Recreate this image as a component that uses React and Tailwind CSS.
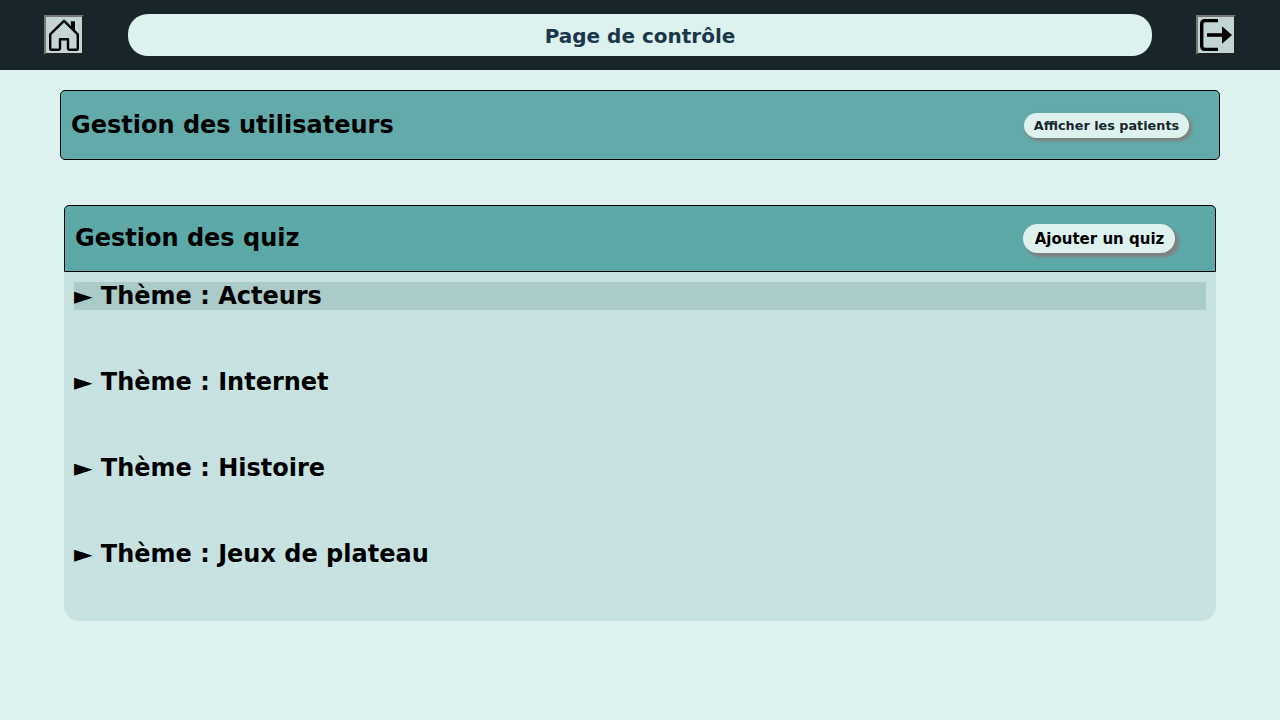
const THEMES = ["Acteurs", "Internet", "Histoire", "Jeux de plateau"];

function IconButton({ label, children }) {
  return (
    <button
      aria-label={label}
      className="flex size-10 items-center justify-center border-2 border-t-[#767676] border-l-[#767676] border-r-[#212121] border-b-[#212121] bg-[#c3d5d2]"
    >
      {children}
    </button>
  );
}

function HomeIcon() {
  return (
    <svg viewBox="0 0 36 36" className="size-9" fill="none" stroke="#000">
      <path d="M24.8 4.2H29V15L24.8 11Z" fill="#000" stroke="none" />
      <path
        d="M18 3.8 4.2 17.4V31.8q0 1 1 1h7.6q1.2 0 1.2-1.2V22.3h8v9.3q0 1.2 1.2 1.2h7.6q1 0 1-1V17.4Z"
        strokeWidth="2.4"
        strokeLinejoin="round"
      />
    </svg>
  );
}

function LogoutIcon() {
  return (
    <svg viewBox="0 0 36 36" className="size-9" fill="none" stroke="#000">
      <path d="M20 3.6H7Q3.7 3.6 3.7 6.9v22.2Q3.7 32.4 7 32.4h13" strokeWidth="3.4" />
      <path d="M9 18h16" strokeWidth="3.6" />
      <path d="M24 9.3 34 18 24 26.7Z" fill="#000" stroke="none" />
    </svg>
  );
}

export default function App() {
  return (
    <div className="min-h-screen bg-[#ddf1ef] font-['DejaVu_Sans',sans-serif] font-bold text-black">
      <header className="flex h-[70px] items-center justify-between bg-[#18252a] px-11">
        <IconButton label="Accueil">
          <HomeIcon />
        </IconButton>
        <h1 className="flex h-[42px] w-[1024px] items-center justify-center rounded-[20px] bg-[#ddf1ef] pt-0.5 text-xl text-[#1a374a]">
          Page de contrôle
        </h1>
        <IconButton label="Déconnexion">
          <LogoutIcon />
        </IconButton>
      </header>

      <section className="mx-[60px] mt-5 flex h-[70px] items-center justify-between rounded-[5px] border border-black bg-[#62abaa] pr-[30px] pl-2.5">
        <h2 className="text-2xl leading-7">Gestion des utilisateurs</h2>
        <button className="h-[25px] w-[165px] rounded-[20px] bg-[#ddf1ef] text-[12.8px] leading-[25px] text-[#18252a] shadow-[2px_2px_3px_1px_#808080]">
          Afficher les patients
        </button>
      </section>

      <main className="mx-16 mt-[45px] h-[416px] rounded-t-[5px] rounded-b-[15px] bg-[#c7e2e0]">
        <div className="flex h-[67px] items-center justify-between rounded-t-[5px] border border-black bg-[#5da9a8] pr-10 pl-2.5">
          <h2 className="pb-0.5 text-2xl leading-7">Gestion des quiz</h2>
          <button className="h-[29px] w-[152px] rounded-[20px] bg-[#ddf1ef] pt-px pl-px text-[15px] leading-7 shadow-[3px_3px_3px_1px_#808080]">
            Ajouter un quiz
          </button>
        </div>
        <ul className="flex flex-col gap-[58px] p-2.5">
          {THEMES.map((theme, i) => (
            <li key={theme} className={i === 0 ? "bg-[#abcbc9] text-2xl leading-7" : "text-2xl leading-7"}>
              ► Thème : {theme}
            </li>
          ))}
        </ul>
      </main>
    </div>
  );
}
